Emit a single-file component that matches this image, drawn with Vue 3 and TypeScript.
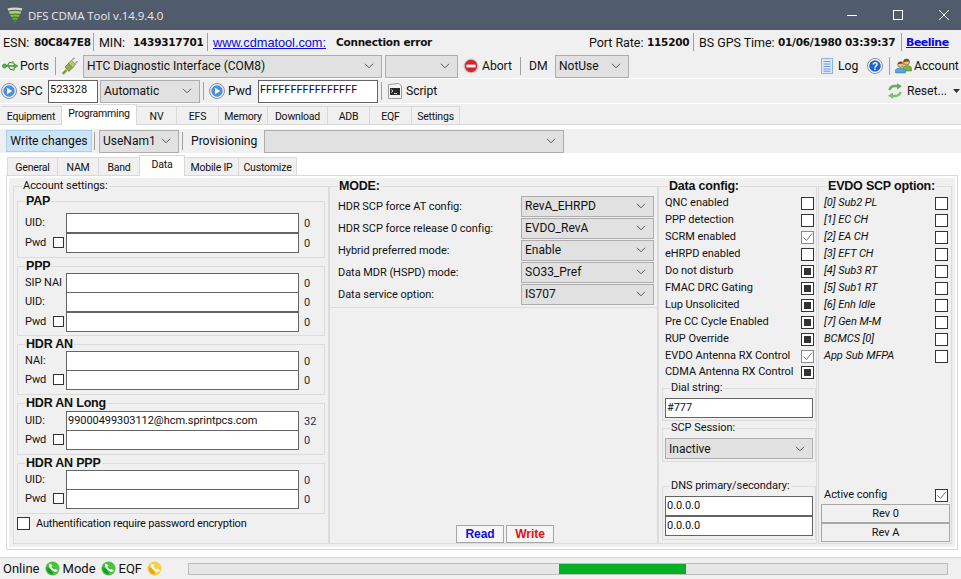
<template>
  <div class="app">
    <div class="titlebar">
      <svg class="logo" width="16" height="16" viewBox="0 0 16 16">
        <path d="M.5 1.5Q8 -.5 15.5 1.5L14.8 3.6Q8 2 1.2 3.6Z" fill="#d5dbc8" />
        <path d="M1.8 4.6Q8 3 14.2 4.6L13.2 7Q8 5.8 2.8 7Z" fill="#a9d83e" />
        <path d="M3.3 7.9Q8 6.9 12.7 7.9L11.7 10Q8 9.2 4.3 10Z" fill="#7fc62a" />
        <path d="M4.8 10.9Q8 10.2 11.2 10.9L10.2 12.9Q8 12.5 5.8 12.9Z" fill="#5fb022" />
        <path d="M6.3 13.7Q8 13.4 9.7 13.7L8 15.8Z" fill="#4b9a1c" />
      </svg>
      <span class="title">DFS CDMA Tool v.14.9.4.0</span>
      <div class="winbtns">
        <svg width="10" height="10" viewBox="0 0 10 10"><path d="M0 5.5H10" stroke="#fff" /></svg>
        <svg width="10" height="10" viewBox="0 0 10 10"><rect x=".5" y=".5" width="9" height="9" fill="none" stroke="#fff" /></svg>
        <svg width="10" height="10" viewBox="0 0 10 10"><path d="M0 0L10 10M10 0L0 10" stroke="#fff" /></svg>
      </div>
    </div>

    <div class="info">
      <span class="t i-esn">ESN:</span><b class="val i-esnv">80C847E8</b><i class="vsep" />
      <span class="t i-min">MIN:</span><b class="val i-minv">1439317701</b><i class="vsep" />
      <a class="link i-link">www.cdmatool.com:</a><b class="val i-conn">Connection error</b>
      <span class="spring" />
      <span class="t i-rate">Port Rate:</span><b class="val i-ratev">115200</b><i class="vsep" />
      <span class="t i-gps">BS GPS Time:</span><b class="val i-gpsv">01/06/1980 03:39:37</b><i class="vsep" />
      <a class="beeline">Beeline</a>
    </div>

    <div class="tool tool1">
      <svg class="ic-usb" width="16" height="12" viewBox="0 0 16 12">
        <path d="M1 6H14" stroke="#3f9a2c" stroke-width="1.6" />
        <circle cx="2.5" cy="6" r="2" fill="#5fb23f" stroke="#2f7020" stroke-width=".6" />
        <path d="M12 3.5L16 6L12 8.5Z" fill="#5fb23f" stroke="#2f7020" stroke-width=".5" />
        <path d="M5 6L7.5 2.5H10" fill="none" stroke="#3f9a2c" stroke-width="1.2" />
        <path d="M6 6L8.5 9.5H11" fill="none" stroke="#3f9a2c" stroke-width="1.2" />
        <rect x="9.5" y="1.2" width="2.6" height="2.6" fill="#7dbd5f" />
        <circle cx="11.5" cy="9.5" r="1.4" fill="#7dbd5f" />
      </svg>
      <span class="tl l-ports">Ports</span><i class="vsep s-a" />
      <svg class="ic-plug" width="16" height="18" viewBox="0 0 16 18">
        <path d="M.8 17L4.5 13" stroke="#7d9a3a" stroke-width="2.4" />
        <path d="M3 10L7 14.5L11 10.5L7 6Z" fill="#8fae45" stroke="#667f2a" stroke-width=".7" />
        <path d="M6.5 6.2L9.5 3.2L13.5 7.6L10.8 10.5Z" fill="#b4cc6e" stroke="#667f2a" stroke-width=".7" />
        <path d="M10 3L12.5 .8M13.2 6.5L15.5 4" stroke="#a3a89a" stroke-width="1.6" />
      </svg>
      <div class="combo big c-port"><span>HTC Diagnostic Interface (COM8)</span><svg class="chev" width="10" height="6" viewBox="0 0 10 6"><path d="M1 .8L5 4.8L9 .8" fill="none" stroke="#555" /></svg></div>
      <div class="combo big c-empty"><span /><svg class="chev" width="10" height="6" viewBox="0 0 10 6"><path d="M1 .8L5 4.8L9 .8" fill="none" stroke="#555" /></svg></div>
      <svg class="ic-abort" width="16" height="16" viewBox="0 0 16 16">
        <circle cx="8" cy="8" r="7.5" fill="#c9c9c9" />
        <circle cx="8" cy="8" r="6.2" fill="#d8222c" />
        <rect x="3.4" y="6.6" width="9.2" height="2.8" fill="#fff" />
      </svg>
      <span class="tl l-abort">Abort</span><i class="vsep s-b" />
      <span class="tl l-dm">DM</span>
      <div class="combo big c-dm"><span>NotUse</span><svg class="chev" width="10" height="6" viewBox="0 0 10 6"><path d="M1 .8L5 4.8L9 .8" fill="none" stroke="#555" /></svg></div>
      <span class="spring" />
      <svg class="ic-log" width="12" height="16" viewBox="0 0 12 16">
        <rect x=".5" y=".5" width="11" height="15" fill="#dbe9f9" stroke="#8fb4e2" />
        <path d="M2.5 3.5H9.5M2.5 6H9.5M2.5 8.5H9.5M2.5 11H9.5M2.5 13.2H9.5" stroke="#6f9bd6" />
      </svg>
      <span class="tl l-log">Log</span>
      <svg class="ic-help" width="16" height="16" viewBox="0 0 16 16">
        <circle cx="8" cy="8" r="7.5" fill="#fff" stroke="#8a8f96" />
        <circle cx="8" cy="8" r="5.8" fill="#1f62cc" />
        <text x="8" y="11.6" text-anchor="middle" class="qmark">?</text>
      </svg>
      <i class="vsep s-c" />
      <svg class="ic-acc" width="17" height="16" viewBox="0 0 17 16">
        <circle cx="11.5" cy="4" r="3" fill="#e8bd88" stroke="#8a5a22" stroke-width=".7" />
        <path d="M11.5 1Q8.5 1 8.5 4L14.5 3.2Q14 1 11.5 1Z" fill="#7a4a1c" />
        <path d="M8 13V9.5Q8.5 7.5 12 7.5Q16 7.5 16.5 9.5V13Z" fill="#7bb24a" stroke="#4e7f2a" stroke-width=".5" />
        <circle cx="5.5" cy="6.5" r="2.8" fill="#edc491" stroke="#8a5a22" stroke-width=".7" />
        <path d="M5.5 3.7Q3 3.7 2.8 6.3L8 5.6Q7.6 3.7 5.5 3.7Z" fill="#7a4a1c" />
        <path d="M.5 15V12Q1 10 5.5 10Q10 10 10.5 12V15Z" fill="#5aa6d8" stroke="#2f6f9e" stroke-width=".5" />
      </svg>
      <span class="tl l-acc">Account</span>
    </div>

    <div class="tool tool2">
      <svg class="ic-play" width="16" height="16" viewBox="0 0 16 16">
        <circle cx="8" cy="8" r="7.5" fill="#e8ecf1" stroke="#8a93a0" />
        <circle cx="8" cy="8" r="5.7" fill="#4a90dc" />
        <path d="M6 4.8L11.2 8L6 11.2Z" fill="#fff" />
      </svg>
      <span class="tl l-spc">SPC</span>
      <div class="edit e-spc">523328</div>
      <div class="combo big c-auto"><span>Automatic</span><svg class="chev" width="10" height="6" viewBox="0 0 10 6"><path d="M1 .8L5 4.8L9 .8" fill="none" stroke="#555" /></svg></div>
      <i class="vsep s-d" />
      <svg class="ic-play p2" width="16" height="16" viewBox="0 0 16 16">
        <circle cx="8" cy="8" r="7.5" fill="#e8ecf1" stroke="#8a93a0" />
        <circle cx="8" cy="8" r="5.7" fill="#4a90dc" />
        <path d="M6 4.8L11.2 8L6 11.2Z" fill="#fff" />
      </svg>
      <span class="tl l-pwd">Pwd</span>
      <div class="edit e-pwd">FFFFFFFFFFFFFFFF</div>
      <i class="vsep s-e" />
      <svg class="ic-script" width="14" height="16" viewBox="0 0 14 16">
        <path d="M.5 1.5L11 .5L13.5 3V15.5H.5Z" fill="#f4f4f4" stroke="#9a9a9a" />
        <rect x="2" y="5" width="10" height="7" fill="#2a2a2a" />
        <path d="M3.2 6.5L5 8L3.2 9.5M6 10.5H9" fill="none" stroke="#fff" stroke-width=".8" />
      </svg>
      <span class="tl l-script">Script</span>
      <span class="spring" />
      <svg class="ic-reset" width="16" height="16" viewBox="0 0 16 16" fill="none">
        <path d="M2.5 7Q3.5 3 8 3H11" stroke="#63ad5a" stroke-width="2.4" />
        <path d="M10 .2L15 3.2L10 6.4Z" fill="#63ad5a" />
        <path d="M13.5 9Q12.5 13 8 13H5" stroke="#7fc06f" stroke-width="2.4" />
        <path d="M6 9.6L1 12.8L6 15.8Z" fill="#7fc06f" />
      </svg>
      <span class="tl l-reset">Reset...</span>
      <svg class="ic-drop" width="7" height="4" viewBox="0 0 7 4"><path d="M0 0H7L3.5 4Z" fill="#333" /></svg>
    </div>

    <div class="tabs main-tabs">
      <div v-for="t in mainTabs" :key="t.name" class="tab" :class="{ on: t.name === 'Programming' }" :style="{ width: t.w + 'px' }">{{ t.name }}</div>
    </div>

    <div class="page">
      <div class="page-tool">
        <div class="wbtn">Write changes</div>
        <i class="vsep s-f" />
        <div class="combo big c-nam"><span>UseNam1</span><svg class="chev" width="10" height="6" viewBox="0 0 10 6"><path d="M1 .8L5 4.8L9 .8" fill="none" stroke="#555" /></svg></div>
        <i class="vsep s-g" />
        <span class="tl l-prov">Provisioning</span>
        <div class="combo big c-prov"><span /><svg class="chev" width="10" height="6" viewBox="0 0 10 6"><path d="M1 .8L5 4.8L9 .8" fill="none" stroke="#555" /></svg></div>
      </div>

      <div class="tabs sub-tabs">
        <div v-for="t in subTabs" :key="t.name" class="tab" :class="{ on: t.name === 'Data' }" :style="{ width: t.w + 'px' }">{{ t.name }}</div>
      </div>

      <div class="panel">
        <div class="panel-in">
          <section class="box account">
            <div class="legend plain">Account settings:</div>
            <div v-for="g in groups" :key="g.title" class="group" :style="{ height: g.h + 'px' }">
              <div class="legend strong" :style="{ marginBottom: g.pad + 'px' }">{{ g.title }}</div>
              <div v-for="r in g.rows" :key="r.label" class="row" :class="{ spaced: r.spaced, blue: g.blue }">
                <span class="lab" :class="{ short: r.check }">{{ r.label }}</span>
                <span v-if="r.check" class="cb small" />
                <div class="edit field">{{ r.value }}</div>
                <span class="count">{{ r.count }}</span>
              </div>
            </div>
            <div class="auth"><span class="cb" /><span>Authentification require password encryption</span></div>
          </section>

          <div class="mid">
            <section class="box mode">
              <div class="legend strong">MODE:</div>
              <div v-for="m in modes" :key="m.label" class="mode-row">
                <span>{{ m.label }}</span>
                <div class="combo c-mode"><span>{{ m.value }}</span><svg class="chev" width="10" height="6" viewBox="0 0 10 6"><path d="M1 .8L5 4.8L9 .8" fill="none" stroke="#555" /></svg></div>
              </div>
            </section>
            <div class="rw">
              <div class="rwbtn read">Read</div>
              <div class="rwbtn write">Write</div>
            </div>
          </div>

          <section class="box dataconf">
            <div class="legend strong">Data config:</div>
            <div v-for="c in dataConfig" :key="c.label" class="chk-row">
              <span class="chk-text">{{ c.label }}</span>
              <span class="cb" :class="c.state"><svg v-if="c.state === 'checked'" width="11" height="11" viewBox="0 0 11 11"><path d="M1.5 5.5L4.5 8.5L10 1.5" fill="none" stroke="#777" /></svg></span>
            </div>
            <div class="sub dial">
              <div class="legend plain">Dial string:</div>
              <div class="edit wide">#777</div>
            </div>
            <div class="sub scp">
              <div class="legend plain">SCP Session:</div>
              <div class="combo c-scp"><span>Inactive</span><svg class="chev" width="10" height="6" viewBox="0 0 10 6"><path d="M1 .8L5 4.8L9 .8" fill="none" stroke="#555" /></svg></div>
            </div>
            <div class="sub dns">
              <div class="legend plain">DNS primary/secondary:</div>
              <div class="edit wide">0.0.0.0</div>
              <div class="edit wide">0.0.0.0</div>
            </div>
          </section>

          <section class="box evdo">
            <div class="legend strong">EVDO SCP option:</div>
            <div v-for="e in evdoOptions" :key="e" class="chk-row em">
              <span class="chk-text">{{ e }}</span>
              <span class="cb" />
            </div>
            <span class="spring" />
            <div class="chk-row active">
              <span class="chk-text">Active config</span>
              <span class="cb dark"><svg width="11" height="11" viewBox="0 0 11 11"><path d="M1.5 5.5L4.5 8.5L10 1.5" fill="none" stroke="#777" /></svg></span>
            </div>
            <div class="rev">Rev 0</div>
            <div class="rev">Rev A</div>
          </section>
        </div>
      </div>
    </div>

    <div class="status">
      <template v-for="s in statusItems" :key="s.name">
        <span class="st-lab">{{ s.name }}</span>
        <svg class="st-ic" width="15" height="15" viewBox="0 0 15 15">
          <circle cx="7.5" cy="7.5" r="7" :fill="s.color" />
          <path d="M1.5 6Q7 7 8 13.5L3.5 12Q1 9 1.5 6Z" :fill="s.shade" />
          <path d="M4.5 2.5Q3.5 4 4.5 6.5Q6.5 10 10.5 11.2L13 9.5L10.5 8L9.3 8.8Q7.5 8 6.5 5.8L7.5 4.5Z" fill="#fff" />
        </svg>
      </template>
      <div class="progress"><div class="progress-fill" :style="{ marginLeft: progress.left + 'px', width: progress.width + 'px' }" /></div>
    </div>
  </div>
</template>

<script setup lang="ts">
const mainTabs = [
  { name: 'Equipment', w: 61 },
  { name: 'Programming', w: 75 },
  { name: 'NV', w: 40 },
  { name: 'EFS', w: 42 },
  { name: 'Memory', w: 49 },
  { name: 'Download', w: 60 },
  { name: 'ADB', w: 42 },
  { name: 'EQF', w: 42 },
  { name: 'Settings', w: 48 }
]

const subTabs = [
  { name: 'General', w: 51 },
  { name: 'NAM', w: 42 },
  { name: 'Band', w: 42 },
  { name: 'Data', w: 46 },
  { name: 'Mobile IP', w: 55 },
  { name: 'Customize', w: 59 }
]

interface AccountRow {
  label: string
  count: string
  check?: boolean
  spaced?: boolean
  value?: string
}

const groups: { title: string; h: number; pad: number; blue?: boolean; rows: AccountRow[] }[] = [
  {
    title: 'PAP',
    h: 57,
    pad: 6,
    rows: [
      { label: 'UID:', count: '0' },
      { label: 'Pwd', count: '0', check: true, spaced: true }
    ]
  },
  {
    title: 'PPP',
    h: 70,
    pad: 1,
    rows: [
      { label: 'SIP NAI', count: '0' },
      { label: 'UID:', count: '0' },
      { label: 'Pwd', count: '0', check: true, spaced: true }
    ]
  },
  {
    title: 'HDR AN',
    h: 51,
    pad: 1,
    rows: [
      { label: 'NAI:', count: '0' },
      { label: 'Pwd', count: '0', check: true }
    ]
  },
  {
    title: 'HDR AN Long',
    h: 52,
    pad: 2,
    blue: true,
    rows: [
      { label: 'UID:', count: '32', value: '99000499303112@hcm.sprintpcs.com' },
      { label: 'Pwd', count: '0', check: true }
    ]
  },
  {
    title: 'HDR AN PPP',
    h: 51,
    pad: 1,
    blue: true,
    rows: [
      { label: 'UID:', count: '0' },
      { label: 'Pwd', count: '0', check: true }
    ]
  }
]

const modes = [
  { label: 'HDR SCP force AT config:', value: 'RevA_EHRPD' },
  { label: 'HDR SCP force release 0 config:', value: 'EVDO_RevA' },
  { label: 'Hybrid preferred mode:', value: 'Enable' },
  { label: 'Data MDR (HSPD) mode:', value: 'SO33_Pref' },
  { label: 'Data service option:', value: 'IS707' }
]

const dataConfig = [
  { label: 'QNC enabled', state: '' },
  { label: 'PPP detection', state: '' },
  { label: 'SCRM enabled', state: 'checked' },
  { label: 'eHRPD enabled', state: '' },
  { label: 'Do not disturb', state: 'mixed' },
  { label: 'FMAC DRC Gating', state: 'mixed' },
  { label: 'Lup Unsolicited', state: 'mixed' },
  { label: 'Pre CC Cycle Enabled', state: 'mixed' },
  { label: 'RUP Override', state: 'mixed' },
  { label: 'EVDO Antenna RX Control', state: 'checked' },
  { label: 'CDMA Antenna RX Control', state: 'mixed' }
]

const evdoOptions = [
  '[0] Sub2 PL',
  '[1] EC CH',
  '[2] EA CH',
  '[3] EFT CH',
  '[4] Sub3 RT',
  '[5] Sub1 RT',
  '[6] Enh Idle',
  '[7] Gen M-M',
  'BCMCS [0]',
  'App Sub MFPA'
]

const statusItems = [
  { name: 'Online', color: '#46c43c', shade: '#1f9a2a' },
  { name: 'Mode', color: '#46c43c', shade: '#1f9a2a' },
  { name: 'EQF', color: '#f7d04a', shade: '#e8a51c' }
]

const progress = { left: 370, width: 127 }
</script>

<style>
html,
body {
  margin: 0;
  background: #f0f0f0;
}
</style>

<style scoped>
* {
  box-sizing: border-box;
}

.app {
  width: 961px;
  height: 579px;
  overflow: hidden;
  display: flex;
  flex-direction: column;
  font: 11px Roboto, 'Liberation Sans', sans-serif;
  letter-spacing: -0.05px;
  color: #111;
  background: #f0f0f0;
}

.spring {
  flex: 1;
}

/* title bar */
.titlebar {
  height: 30px;
  background: #505c6b;
  display: flex;
  align-items: center;
  flex: none;
}
.logo {
  margin-left: 7px;
}
.title {
  margin-left: 5px;
  color: #e8eaed;
  font: 11.5px 'Open Sans', sans-serif;
}
.winbtns {
  margin-left: auto;
  display: flex;
  gap: 36px;
  margin-right: 12px;
}

/* info row */
.info {
  height: 24px;
  flex: none;
  display: flex;
  align-items: center;
  white-space: nowrap;
  font: 12.5px Roboto, 'Liberation Sans', sans-serif;
}
.vsep {
  display: block;
  flex: none;
  width: 1px;
  height: 18px;
  background: #a0a0a0;
}
.val {
  font: bold 10.5px 'DejaVu Sans', sans-serif;
  letter-spacing: -0.25px;
}
.i-esn { margin-left: 3px; width: 31px; }
.i-esnv { width: 59px; }
.i-min { margin-left: 5px; width: 34px; }
.i-minv { width: 74px; }
.i-link { margin-left: 5px; width: 123px; }
.link { color: #0a0adf; text-decoration: underline; font: 12.8px 'Liberation Sans', sans-serif; }
.i-rate { width: 58px; }
.i-ratev { width: 46px; }
.i-gps { margin-left: 5px; width: 79px; }
.i-gpsv { width: 123px; }
.beeline {
  margin: 0 14px 0 4px;
  width: 41px;
  color: #0a0adf;
  text-decoration: underline;
  font: bold 11px 'DejaVu Sans', sans-serif;
  letter-spacing: -0.5px;
}

/* toolbars */
.tool {
  height: 25px;
  flex: none;
  display: flex;
  align-items: center;
  white-space: nowrap;
  border-bottom: 1px solid #fff;
}
.tl {
  font: 12.2px Roboto, 'Liberation Sans', sans-serif;
}
.ic-usb { margin-left: 2px; }
.l-ports { margin-left: 2px; width: 32px; }
.s-a { margin-left: 3px; }
.ic-plug { margin-left: 6px; }
.ic-abort { margin-left: 5px; }
.l-abort { margin-left: 3px; width: 33px; }
.s-b { margin-left: 5px; }
.l-dm { margin-left: 8px; width: 26px; }
.ic-log { margin-right: 5px; }
.l-log { width: 29px; }
.s-c { margin-left: 6px; }
.ic-acc { margin-left: 5px; }
.l-acc { margin-left: 2px; width: 47px; }

.combo {
  display: flex;
  align-items: center;
  justify-content: space-between;
  background: #e1e1e1;
  border: 1px solid #adadad;
  padding: 0 7px 0 3px;
  flex: none;
  height: 21px;
  font-size: 12px;
  letter-spacing: 0;
}
.combo.big {
  height: 23px;
}
.c-port { margin-left: 5px; width: 299px; }
.c-empty { margin-left: 3px; width: 73px; }
.c-dm { width: 74px; }
.c-auto { margin-left: 2px; width: 100px; }
.c-nam { margin-left: 4px; width: 80px; }
.c-prov { width: 300px; margin-left: 7px; }

.edit {
  background: #fff;
  border: 1px solid #646464;
  padding: 0 1px;
  flex: none;
  white-space: nowrap;
  overflow: hidden;
}
.e-spc {
  margin-left: 7px;
  width: 50px;
  height: 23px;
  line-height: 17px;
  letter-spacing: 0;
}
.e-pwd {
  margin-left: 1px;
  width: 120px;
  height: 23px;
  line-height: 17px;
  letter-spacing: 0;
}
.ic-play { margin-left: 1px; }
.l-spc { margin-left: 3px; width: 21px; }
.s-d { margin-left: 3px; }
.ic-play.p2 { margin-left: 5px; }
.l-pwd { margin-left: 3px; width: 29px; }
.s-e { margin-left: 3px; }
.ic-script { margin-left: 6px; }
.l-script { margin-left: 4px; }
.l-reset { margin-left: 4px; width: 46px; }
.ic-drop { margin-right: 1px; }
.qmark {
  font: bold 10px 'Liberation Sans', Arial, sans-serif;
  fill: #fff;
}

/* tabs */
.tabs {
  display: flex;
  align-items: flex-end;
  flex: none;
}
.tab {
  height: 18px;
  background: #f0f0f0;
  border: 1px solid #d9d9d9;
  border-left-width: 0;
  border-bottom: 0;
  text-align: center;
  line-height: 19px;
  white-space: nowrap;
  font-size: 10.5px;
  letter-spacing: -0.2px;
}
.tab.on {
  height: 21px;
  background: #fff;
  line-height: 18px;
  margin-bottom: -1px;
  position: relative;
}
.main-tabs {
  height: 21px;
  padding: 0 0 0 1px;
  border-bottom: 1px solid #d9d9d9;
}
.page {
  flex: 1;
  background: #fff;
  display: flex;
  flex-direction: column;
  padding-top: 4px;
  min-height: 0;
}
.page-tool {
  height: 24px;
  flex: none;
  background: #f0f0f0;
  display: flex;
  align-items: center;
  white-space: nowrap;
}
.wbtn {
  margin-left: 6px;
  width: 86px;
  height: 22px;
  line-height: 20px;
  text-align: center;
  background: #cce4f7;
  border: 1px solid #a6d0f0;
  font-size: 12.2px;
  letter-spacing: 0;
}
.s-f { margin-left: 2px; }
.s-g { margin-left: 3px; }
.l-prov { margin-left: 8px; width: 66px; }
.sub-tabs {
  height: 21px;
  margin-top: 1px;
  padding-left: 8px;
}
.sub-tabs .tab {
  border-left-width: 1px;
  margin-left: -1px;
}
.panel {
  margin: 0 3px 7px 6px;
  border: 1px solid #d9d9d9;
  background: #fff;
  padding: 2px;
  flex: 1;
  min-height: 0;
}
.panel-in {
  height: 100%;
  background: #f0f0f0;
  display: flex;
  align-items: flex-start;
  padding: 8px 0 0 4px;
}

/* group boxes */
.box {
  border: 1px solid #dcdcdc;
  display: flex;
  flex-direction: column;
  flex: none;
}
.legend {
  width: fit-content;
  background: #f0f0f0;
  padding: 0 1px;
  white-space: nowrap;
  line-height: 12px;
  margin-top: -7px;
}
.legend.strong {
  font: bold 12.5px 'Liberation Sans', Arial, sans-serif;
  line-height: 12px;
  letter-spacing: -0.2px;
}
.account {
  width: 316px;
  height: 358px;
  padding: 0 3px;
}
.account > .legend {
  margin-left: 5px;
}
.group {
  border: 1px solid #dcdcdc;
  flex: none;
  margin-top: 8px;
}
.account > .legend + .group {
  margin-top: 9px;
}
.group .legend {
  margin-left: 7px;
}
.row {
  display: flex;
  align-items: flex-start;
  height: 19px;
  padding-left: 7px;
}
.row.spaced {
  margin-top: 1px;
}
.lab {
  width: 41px;
  flex: none;
  line-height: 20px;
  white-space: nowrap;
}
.lab.short {
  width: 28px;
}
.cb {
  display: inline-flex;
  align-items: center;
  justify-content: center;
  width: 13px;
  height: 13px;
  background: #fff;
  border: 1px solid #333;
  flex: none;
}
.cb.small {
  width: 11px;
  height: 11px;
  margin: 4px 2px 0 0;
}
.cb.checked {
  border-color: #8a8a8a;
}
.cb.dark {
  border-color: #333;
}
.cb.mixed::after {
  content: '';
  width: 7px;
  height: 7px;
  background: #333;
}
.field {
  width: 233px;
  height: 20px;
  line-height: 17px;
}
.count {
  margin-left: 5px;
  line-height: 22px;
  color: #2b2b2b;
}
.row.blue .count {
  color: #1a2d60;
}
.auth {
  display: flex;
  align-items: center;
  gap: 6px;
  margin-top: 3px;
  white-space: nowrap;
  letter-spacing: -0.2px;
}

/* middle column */
.mid {
  width: 329px;
  height: 358px;
  border: 1px solid #dcdcdc;
  border-top: 0;
  flex: none;
  display: flex;
  flex-direction: column;
}
.mode {
  height: 122px;
  border-width: 1px 0 1px 0;
  padding: 0 3px 0 8px;
}
.mode .legend {
  margin-bottom: 3px;
}
.mode-row {
  display: flex;
  justify-content: space-between;
  align-items: center;
  height: 22px;
  white-space: nowrap;
}
.c-mode {
  width: 133px;
}
.rw {
  margin-top: auto;
  margin-bottom: 0;
  display: flex;
  justify-content: center;
  gap: 2px;
  padding-left: 23px;
}
.rwbtn {
  width: 48px;
  height: 18px;
  text-align: center;
  font: bold 12px 'Liberation Sans', Arial, sans-serif;
  line-height: 16px;
  border: 1px solid #a8a8a8;
  background: #f6f6f6;
}
.read { color: #1010e0; }
.write { color: #e01010; }

/* right columns */
.dataconf {
  width: 159px;
  height: 358px;
  padding: 0 2px 0 6px;
}
.chk-row {
  display: flex;
  justify-content: space-between;
  align-items: center;
  height: 17px;
  white-space: nowrap;
}
.chk-text {
  margin-top: -2px;
}
.dataconf > .legend {
  margin-left: 3px;
  margin-bottom: 3px;
}
.dataconf > .chk-row:nth-of-type(12) {
  height: 15px;
}
.sub {
  border: 1px solid #dcdcdc;
  margin: 0 0 0 -3px;
  width: 154px;
  padding: 0 2px;
  flex: none;
}
.sub .legend {
  margin-left: 5px;
  margin-bottom: 4px;
}
.dial {
  height: 33px;
  margin-top: 8px;
}
.scp {
  height: 34px;
  margin-top: 7px;
}
.dns {
  height: 54px;
  margin-top: 24px;
}
.wide {
  width: 148px;
  height: 20px;
  line-height: 17px;
}
.c-scp {
  width: 148px;
}
.evdo {
  width: 134px;
  height: 358px;
  margin-left: 1px;
  padding: 0 2px;
}
.evdo > .legend {
  margin-left: 6px;
  margin-bottom: 3px;
}
.evdo .chk-row {
  padding: 0 1px 0 3px;
}
.em {
  font-style: italic;
}
.evdo .active {
  height: 15px;
  margin-bottom: 1px;
}
.rev {
  height: 19px;
  line-height: 17px;
  border: 1px solid #a8a8a8;
  text-align: center;
  background: #f0f0f0;
  width: 129px;
}
.rev + .rev {
  margin-bottom: 1px;
}

/* status bar */
.status {
  height: 22px;
  flex: none;
  display: flex;
  align-items: center;
  border-top: 1px solid #d9d9d9;
  padding-left: 3px;
  font-size: 13px;
  letter-spacing: 0;
}
.st-lab {
  margin-right: 5px;
}
.st-ic {
  margin-right: 3px;
}
.progress {
  margin-left: auto;
  margin-right: 13px;
  width: 760px;
  height: 12px;
  background: #e6e6e6;
  border: 1px solid #bcbcbc;
}
.progress-fill {
  height: 100%;
  background: #06b025;
}
</style>
